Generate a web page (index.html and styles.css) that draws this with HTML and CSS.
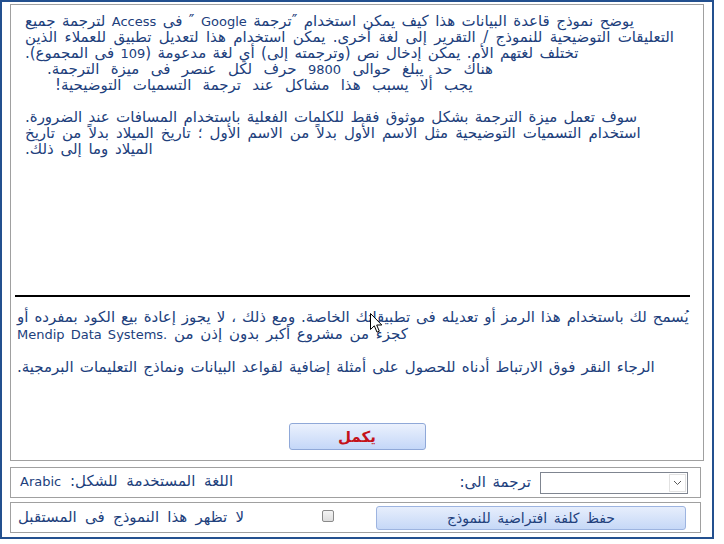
FILE: index.html
```html
<!DOCTYPE html>
<html lang="ar">
<head>
<meta charset="utf-8">
<title>ترجمة Google</title>
<link rel="stylesheet" href="styles.css">
</head>
<body>
<div class="frame">
  <div class="main">
    <div class="txt p1">
      <div class="ln l1">يوضح نموذج قاعدة البيانات هذا كيف يمكن استخدام ″ترجمة <span class="lat">Google</span> ″ فى <span class="lat">Access</span> لترجمة جميع</div>
      <div class="ln l2">التعليقات التوضيحية للنموذج / التقرير إلى لغة أخرى. يمكن استخدام هذا لتعديل تطبيق للعملاء الذين</div>
      <div class="ln l3">تختلف لغتهم الأم. يمكن إدخال نص (وترجمته إلى) أي لغة مدعومة (<span class="lat">109</span> فى المجموع).</div>
      <div class="ln l4">هناك حد يبلغ حوالى <span class="lat">9800</span> حرف لكل عنصر فى ميزة الترجمة.</div>
      <div class="ln l5">يجب ألا يسبب هذا مشاكل عند ترجمة التسميات التوضيحية!</div>
      <div class="blank"></div>
      <div class="ln l6">سوف تعمل ميزة الترجمة بشكل موثوق فقط للكلمات الفعلية باستخدام المسافات عند الضرورة.</div>
      <div class="ln l7">استخدام التسميات التوضيحية مثل الاسم الأول بدلاً من الاسم الأول ؛ تاريخ الميلاد بدلاً من تاريخ</div>
      <div class="ln">الميلاد وما إلى ذلك.</div>
    </div>
    <div class="sep"></div>
    <div class="txt p3">
      <div class="ln l9">يُسمح لك باستخدام هذا الرمز أو تعديله فى تطبيقاتك الخاصة. ومع ذلك ، لا يجوز إعادة بيع الكود بمفرده أو</div>
      <div class="ln">كجزء من مشروع أكبر بدون إذن من <bdi dir="ltr" class="lat">Mendip Data Systems.</bdi></div>
      <div class="blank b3"></div>
      <div class="ln l11">الرجاء النقر فوق الارتباط أدناه للحصول على أمثلة إضافية لقواعد البيانات ونماذج التعليمات البرمجية.</div>
    </div>
    <div class="btn-row"><button class="btn btn-next">يكمل</button></div>
  </div>
  <div class="row row-lang">
    <div class="cell-text"><span>اللغة المستخدمة للشكل: <span class="lat">Arabic</span></span></div>
    <div class="lbl">ترجمة الى:</div>
    <div class="combo"><span class="combo-btn"><svg width="9" height="6" viewBox="0 0 9 6"><polyline points="1,1 4.5,4.5 8,1" fill="none" stroke="#5a5a5a" stroke-width="1"/></svg></span></div>
  </div>
  <div class="row row-opts">
    <div class="opt-text"><span>لا تظهر هذا النموذج فى المستقبل</span></div>
    <span class="chk"></span>
    <button class="btn btn-save">حفظ كلفة افتراضية للنموذج</button>
  </div>
</div>
<svg class="cursor" width="13" height="21" viewBox="0 0 13 21"><path d="M0.5,0.5 L0.5,16.5 L4.3,12.8 L7,19.2 L9.3,18.2 L6.7,12 L11.8,12 Z" fill="#fff" stroke="#000" stroke-width="1" stroke-linejoin="miter"/></svg>
</body>
</html>
```
FILE: styles.css
```css
* { box-sizing: border-box; }
html, body { margin: 0; padding: 0; background: #fff; }
body {
  font-family: "DejaVu Sans", sans-serif;
  font-size: 15px;
  color: #21407c;
  position: relative;
  width: 724px;
  height: 544px;
  overflow: hidden;
}
.lat { font-size: 13px; line-height: 1; }
.frame {
  width: 714px;
  height: 539px;
  border: 2px solid #23508f;
  padding: 2px 0 0 8px;
  display: flex;
  flex-direction: column;
}
.main {
  width: 694px;
  height: 457px;
  border: 1px solid #a0a0a0;
  display: flex;
  flex-direction: column;
}
.txt { direction: ltr; white-space: nowrap; }
.ln { direction: rtl; width: max-content; word-spacing: 2px; }
.p1 { padding: 8px 0 0 14px; line-height: 16px; }
.p1 .ln { height: 16px; }
.blank { height: 16px; }
.l1 { word-spacing: 1.7px; }
.l2 { word-spacing: 2.6px; }
.l3 { word-spacing: 1.6px; }
.l4 { margin-left: 22px; word-spacing: 6.6px; }
.l5 { margin-left: 30px; word-spacing: 6.5px; }
.l6 { word-spacing: 1.5px; }
.l7 { word-spacing: 2.3px; }
.l9 { word-spacing: 1.2px; }
.l11 { word-spacing: 1.4px; }
.sep {
  height: 2px;
  width: 675px;
  background: #000;
  margin: 138px 0 0 4px;
}
.p3 { padding: 12px 0 0 6px; line-height: 16.5px; }
.p3 .ln { height: 16.5px; }
.b3 { height: 16.5px; }
.btn-row { display: flex; justify-content: center; margin-top: 48px; }
.btn {
  font-family: "DejaVu Sans", sans-serif;
  border: 1px solid #8fa8d8;
  border-radius: 3px;
  background: linear-gradient(#ebf1fd, #c4d7f8);
  padding: 0;
  direction: rtl;
}
.btn-next {
  width: 137px;
  height: 27px;
  color: #c4121a;
  font-weight: bold;
  font-size: 15px;
}
.row {
  width: 691px;
  height: 31px;
  border: 1px solid #a0a0a0;
  display: flex;
  align-items: center;
}
.row-lang { margin-top: 6px; }
.row-opts { margin-top: 4px; }
.cell-text { direction: ltr; padding-left: 9px; flex: 1; white-space: nowrap; margin-top: -3px; }
.cell-text > span { direction: rtl; display: inline-block; word-spacing: 4px; }
.lbl { direction: rtl; white-space: nowrap; word-spacing: 2px; margin-top: -2px; }
.combo {
  width: 148px;
  height: 22px;
  margin: 0 12px 0 9px;
  border: 1px solid #7f8590;
  background: #fff;
  display: flex;
  justify-content: flex-end;
  padding: 1px;
}
.combo-btn {
  width: 17px;
  height: 18px;
  border: 1px solid #e2e2e2;
  display: flex;
  align-items: center;
  justify-content: center;
}
.opt-text { width: 311px; padding-left: 7px; direction: ltr; white-space: nowrap; margin-top: -2px; }
.opt-text span { direction: rtl; display: inline-block; word-spacing: 3.5px; }
.chk {
  width: 12px;
  height: 12px;
  border: 1px solid #8a8a8a;
  border-radius: 2px;
  background: linear-gradient(#f4f4f4, #dedede);
  margin-top: -3px;
}
.btn-save {
  width: 310px;
  height: 24px;
  margin-left: 42px;
  color: #21407c;
  font-size: 14px;
  word-spacing: 2px;
  border-color: #9db4e0;
  background: linear-gradient(#e7eefc, #c6d8f7);
}
.cursor { position: absolute; left: 370px; top: 313px; }
```
